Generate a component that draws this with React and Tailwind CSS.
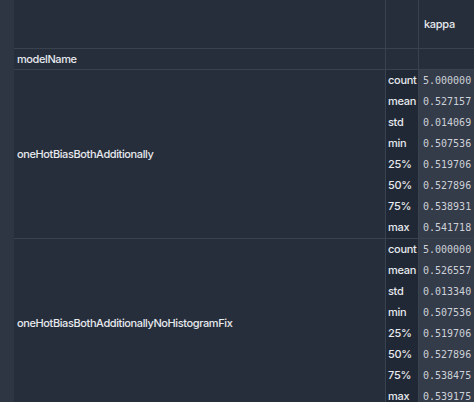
import React from "react";

const groups = [
  {
    name: "oneHotBiasBothAdditionally",
    rows: [
      ["count", "5.000000"],
      ["mean", "0.527157"],
      ["std", "0.014069"],
      ["min", "0.507536"],
      ["25%", "0.519706"],
      ["50%", "0.527896"],
      ["75%", "0.538931"],
      ["max", "0.541718"],
    ],
  },
  {
    name: "oneHotBiasBothAdditionallyNoHistogramFix",
    rows: [
      ["count", "5.000000"],
      ["mean", "0.526557"],
      ["std", "0.013340"],
      ["min", "0.507536"],
      ["25%", "0.519706"],
      ["50%", "0.527896"],
      ["75%", "0.538475"],
      ["max", "0.539175"],
    ],
  },
];

export default function App() {
  return (
    <div
      className="flex w-[474px] h-[402px] overflow-hidden bg-[#262e3b] text-[#e6e9ee]"
      style={{ fontFamily: "Inter, 'Noto Sans', sans-serif" }}
    >
      <div className="w-[14px] shrink-0 bg-[#2f3643]" />
      <div className="flex flex-col flex-1">
        {/* header */}
        <div className="flex h-[49px] shrink-0 border-b border-[#39424f]">
          <div className="w-[372px] border-r border-[#39424f]" />
          <div className="w-[33px] border-r border-[#39424f]" />
          <div className="flex-1 flex items-center pl-[5px] text-[11px] font-medium tracking-[-0.3px]">kappa</div>
        </div>
        {/* modelName row */}
        <div className="flex h-[21px] shrink-0 border-b border-[#39424f]">
          <div className="w-[372px] border-r border-[#39424f] flex items-center pl-[3px] text-[11px] font-medium tracking-[-0.4px]">
            modelName
          </div>
          <div className="w-[33px] border-r border-[#39424f]" />
          <div className="flex-1" />
        </div>
        {groups.map((g) => (
          <div key={g.name} className="flex shrink-0 border-b border-[#39424f]">
            <div className="w-[372px] border-r border-[#39424f] flex items-center pl-[3px] text-[11px] font-medium tracking-[-0.4px]">
              {g.name}
            </div>
            <div className="flex flex-col flex-1">
              {g.rows.map(([k, v]) => (
                <div key={k} className="flex h-[21px]">
                  <div className="w-[33px] bg-[#212835] border-r border-[#39424f] flex items-center pl-[2px] text-[11px] font-medium tracking-[-0.3px]">
                    {k}
                  </div>
                  <div
                    className="flex-1 bg-[#343b49] flex items-center pl-[4px] text-[10px] text-[#cdd1d8]"
                    style={{ fontFamily: "'DejaVu Sans Mono', monospace" }}
                  >
                    {v}
                  </div>
                </div>
              ))}
            </div>
          </div>
        ))}
      </div>
    </div>
  );
}
